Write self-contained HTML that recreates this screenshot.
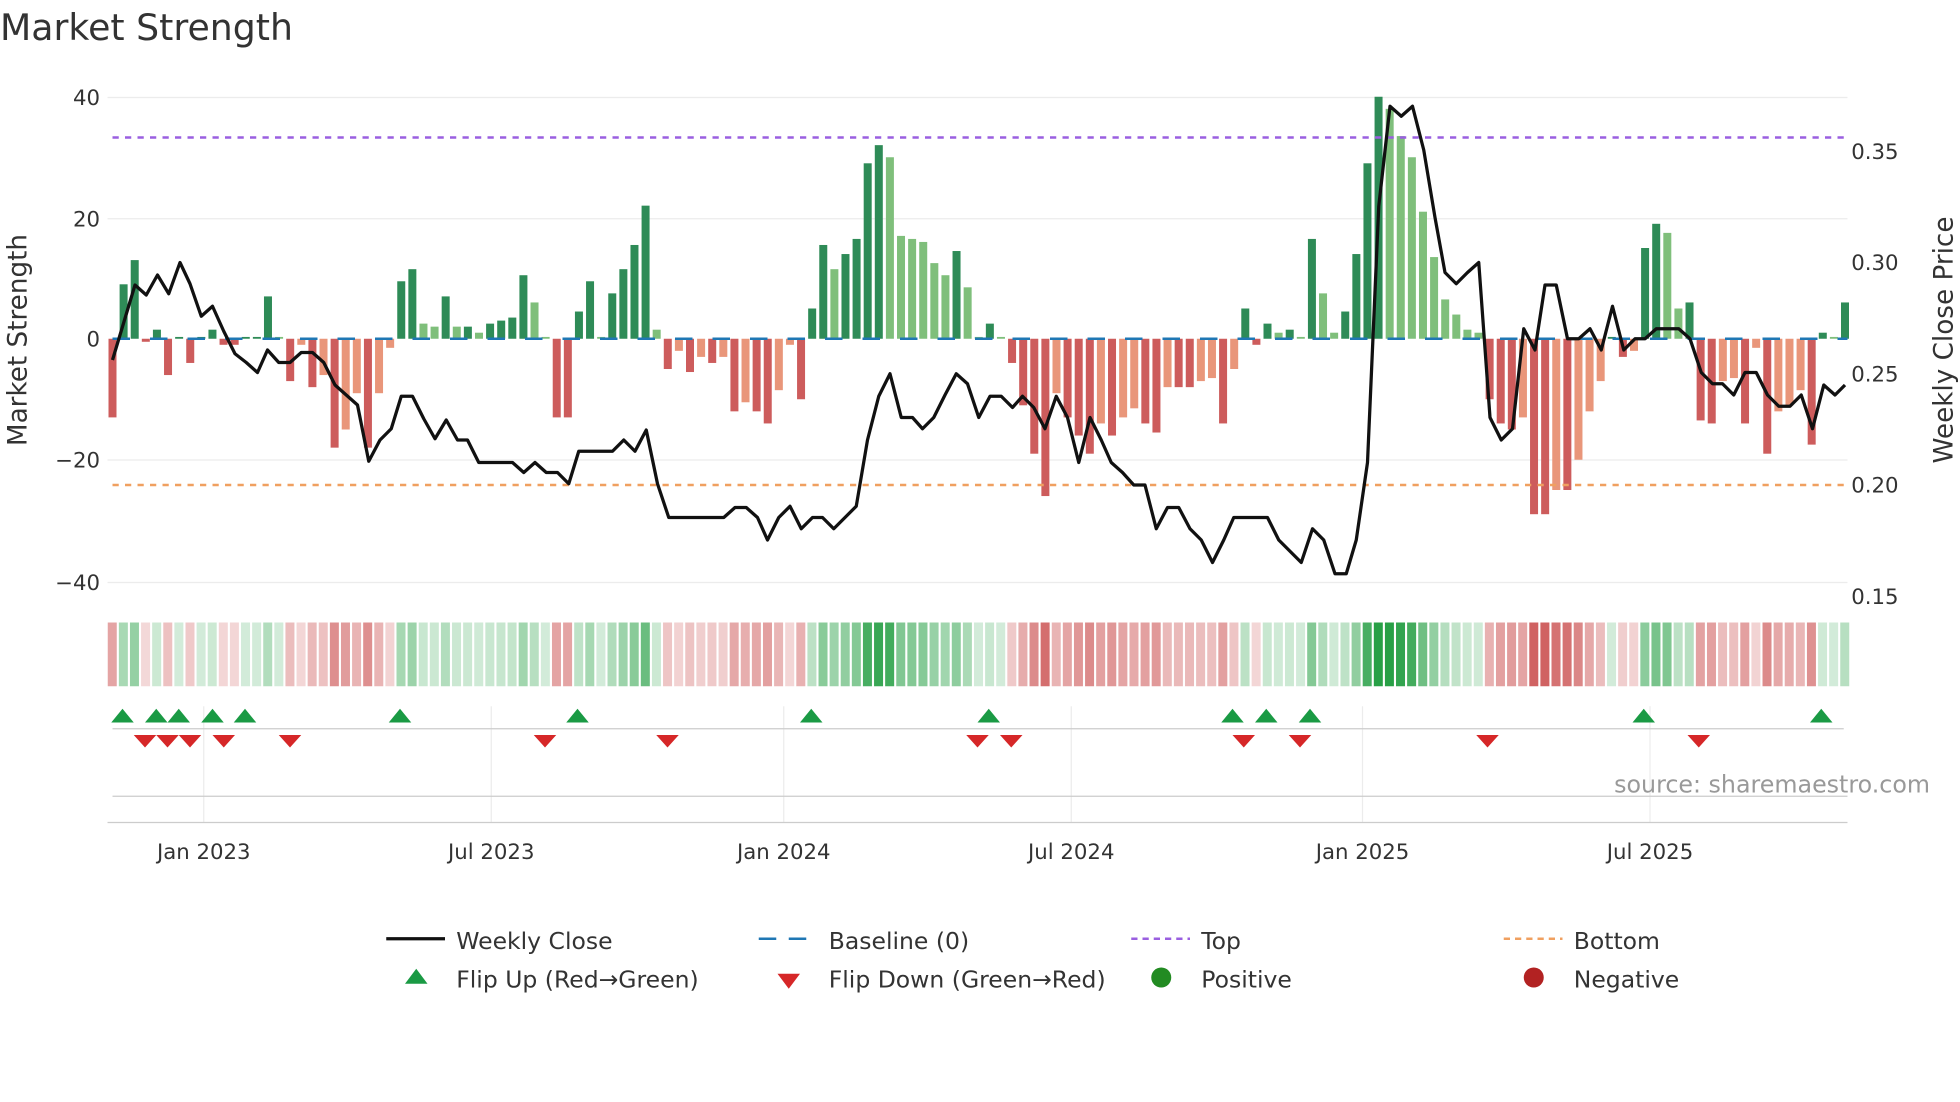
<!DOCTYPE html>
<html><head><meta charset="utf-8"><style>
html,body{margin:0;padding:0;background:#fff;width:1960px;height:1102px;overflow:hidden}
svg{display:block}
text{font-family:"DejaVu Sans","Liberation Sans",sans-serif;fill:#333}
</style></head><body>
<svg id="s" width="1960" height="1102" viewBox="0 0 1568 881.6" xmlns="http://www.w3.org/2000/svg">
<rect width="1568" height="882" fill="#fff"/>
<text x="0" y="32" font-size="29" fill="#333">Market Strength</text>
<g stroke="#ececec" stroke-width="1">
<line x1="86" y1="78" x2="1478" y2="78"/><line x1="86" y1="175" x2="1478" y2="175"/>
<line x1="86" y1="368" x2="1478" y2="368"/><line x1="86" y1="466" x2="1478" y2="466"/>
<line x1="163" y1="565" x2="163" y2="658"/><line x1="393" y1="565" x2="393" y2="658"/>
<line x1="627" y1="565" x2="627" y2="658"/><line x1="857" y1="565" x2="857" y2="658"/>
<line x1="1090" y1="565" x2="1090" y2="658"/><line x1="1320" y1="565" x2="1320" y2="658"/>
</g>
<line x1="90" y1="583" x2="1475" y2="583" stroke="#ccc"/>
<line x1="90" y1="637" x2="1478" y2="637" stroke="#ccc"/>
<line x1="86" y1="658" x2="1478" y2="658" stroke="#ccc"/>
<g id="bars"></g>
<line x1="90" y1="271" x2="1478" y2="271" stroke="#1f77b4" stroke-width="2" stroke-dasharray="14,16"/>
<line x1="90" y1="110" x2="1478" y2="110" stroke="#9a5fe0" stroke-width="2" stroke-dasharray="5,5"/>
<line x1="90" y1="388" x2="1478" y2="388" stroke="#f0a060" stroke-width="2" stroke-dasharray="5,5"/>
<polyline id="price" fill="none" stroke="#111" stroke-width="2.6" stroke-linejoin="round"/>
<g id="heat"></g>
<g id="marks"></g>
<g font-size="17">
<text x="80" y="84" text-anchor="end">40</text><text x="80" y="181" text-anchor="end">20</text>
<text x="80" y="277" text-anchor="end">0</text><text x="80" y="374" text-anchor="end">−20</text>
<text x="80" y="472" text-anchor="end">−40</text>
<text x="1481" y="127">0.35</text><text x="1481" y="216">0.30</text><text x="1481" y="305">0.25</text>
<text x="1481" y="394">0.20</text><text x="1481" y="483">0.15</text>
<text x="163" y="687" text-anchor="middle">Jan 2023</text><text x="393" y="687" text-anchor="middle">Jul 2023</text>
<text x="627" y="687" text-anchor="middle">Jan 2024</text><text x="857" y="687" text-anchor="middle">Jul 2024</text>
<text x="1090" y="687" text-anchor="middle">Jan 2025</text><text x="1320" y="687" text-anchor="middle">Jul 2025</text>
</g>
<text transform="translate(21,272) rotate(-90)" font-size="21" text-anchor="middle">Market Strength</text>
<text transform="translate(1562,272) rotate(-90)" font-size="21" text-anchor="middle">Weekly Close Price</text>
<text x="1544" y="634" font-size="19" text-anchor="end" style="fill:#999">source: sharemaestro.com</text>
<g font-size="18.8">
<line x1="309" y1="751" x2="356" y2="751" stroke="#111" stroke-width="2.6"/><text x="365" y="759">Weekly Close</text>
<line x1="607" y1="751" x2="654" y2="751" stroke="#1f77b4" stroke-width="2" stroke-dasharray="14,10"/><text x="663" y="759">Baseline (0)</text>
<line x1="905" y1="751" x2="952" y2="751" stroke="#9a5fe0" stroke-width="2" stroke-dasharray="5,4"/><text x="961" y="759">Top</text>
<line x1="1203" y1="751" x2="1250" y2="751" stroke="#f0a060" stroke-width="2" stroke-dasharray="5,4"/><text x="1259" y="759">Bottom</text>
<polygon points="324,787 342,787 333,775" fill="#1a9a44"/><text x="365" y="790">Flip Up (Red→Green)</text>
<polygon points="622,779 640,779 631,791" fill="#d62728"/><text x="663" y="790">Flip Down (Green→Red)</text>
<circle cx="929" cy="782" r="8" fill="#228b22"/><text x="961" y="790">Positive</text>
<circle cx="1227" cy="782" r="8" fill="#b22222"/><text x="1259" y="790">Negative</text>
</g>
</svg>
<script>
var v=[-13,9,13,-0.5,1.5,-6,0.3,-4,0.3,1.5,-1,-1,0.3,0.3,7,0.3,-7,-1,-8,-6,-18,-15,-9,-18,-9,-1.5,9.5,11.5,2.5,2,7,2,2,1,2.5,3,3.5,10.5,6,0.3,-13,-13,4.5,9.5,0.3,7.5,11.5,15.5,22,1.5,-5,-2,-5.5,-3,-4,-3,-12,-10.5,-12,-14,-8.5,-1,-10,5,15.5,11.5,14,16.5,29,32,30,17,16.5,16,12.5,10.5,14.5,8.5,0.3,2.5,0.3,-4,-11,-19,-26,-9,-13,-16,-19,-14,-16,-13,-11.5,-14,-15.5,-8,-8,-8,-7,-6.5,-14,-5,5,-1,2.5,1,1.5,0.3,16.5,7.5,1,4.5,14,29,40,38,33.5,30,21,13.5,6.5,4,1.5,1,-10,-14,-15,-13,-29,-29,-25,-25,-20,-12,-7,0.3,-3,-2,15,19,17.5,5,6,-13.5,-14,-7,-6.5,-14,-1.5,-19,-12,-11,-8.5,-17.5,1,0.3,6];
var NS="http://www.w3.org/2000/svg",n=v.length,dx=(1476-90)/(n-1);
function el(t,a,p){var e=document.createElementNS(NS,t);for(var k in a)e.setAttribute(k,a[k]);p.appendChild(e);return e}
var B=document.getElementById('bars'),H=document.getElementById('heat');
for(var i=0;i<n;i++){var x=90+i*dx,val=v[i],p=i?v[i-1]:0,c;
 if(val>=0)c=(val>=p)?'#2e8b57':'#7fbf7b';else c=(val<=p)?'#cd5c5c':'#e9967a';
 var h=Math.abs(val)*4.84,y=val>=0?271-h:271;el('rect',{x:x-3.2,y:y,width:6.4,height:Math.max(h,1),fill:c},B);
 var a=Math.min(1,0.2+Math.abs(val)/40*0.9),hc=val>=0?'rgba(40,160,70,'+a+')':'rgba(200,70,70,'+a+')';
 el('rect',{x:x-3.8,y:498,width:7.2,height:51,fill:hc},H);}
var pts=[[90,288],[99,258],[108,228],[117,236],[126,220],[135,235],[144,210],[152,227],[161,253],[170,245],[179,265],[188,283],[197,290],[206,298],[214,280],[223,290],[232,290],[241,282],[250,282],[259,290],[268,308],[277,316],[286,324],[295,369],[304,352],[313,343],[321,317],[330,317],[339,335],[348,351],[357,336],[366,352],[374,352],[383,370],[392,370],[401,370],[410,370],[419,378],[428,370],[437,378],[446,378],[455,387],[463,361],[472,361],[481,361],[490,361],[499,352],[508,361],[517,344],[526,387],[535,414],[543,414],[552,414],[561,414],[570,414],[579,414],[588,406],[597,406],[606,414],[614,432],[623,414],[632,405],[641,423],[650,414],[658,414],[667,423],[676,414],[685,405],[694,352],[703,317],[712,299],[721,334],[730,334],[738,343],[747,334],[756,316],[765,299],[774,307],[783,334],[792,317],[801,317],[810,326],[818,317],[827,326],[836,343],[845,317],[854,334],[863,370],[872,334],[881,352],[889,370],[898,378],[907,388],[916,388],[925,423],[934,406],[943,406],[952,423],[961,432],[970,450],[979,432],[987,414],[996,414],[1005,414],[1014,414],[1023,432],[1032,441],[1041,450],[1050,423],[1059,432],[1068,459],[1077,459],[1085,432],[1094,370],[1103,165],[1112,85],[1121,93],[1130,85],[1139,120],[1148,174],[1156,218],[1165,227],[1174,218],[1183,210],[1192,334],[1201,352],[1210,343],[1219,263],[1228,280],[1236,228],[1245,228],[1254,271],[1263,271],[1272,263],[1281,280],[1290,245],[1299,280],[1308,271],[1316,271],[1325,263],[1334,263],[1343,263],[1352,271],[1361,298],[1370,307],[1378,307],[1387,316],[1396,298],[1405,298],[1414,316],[1423,325],[1432,325],[1441,316],[1450,343],[1459,308],[1468,316],[1476,308]];
document.getElementById('price').setAttribute('points',pts.map(function(p){return p.join(',')}).join(' '));
var M=document.getElementById('marks');
[98,125,143,170,196,320,462,649,791,986,1013,1048,1315,1457].forEach(function(x){el('polygon',{points:(x-9)+',578 '+(x+9)+',578 '+x+',567',fill:'#1a9a44'},M)});
[116,134,152,179,232,436,534,782,809,995,1040,1190,1359].forEach(function(x){el('polygon',{points:(x-9)+',588 '+(x+9)+',588 '+x+',598',fill:'#d62728'},M)});
</script>
</body></html>
